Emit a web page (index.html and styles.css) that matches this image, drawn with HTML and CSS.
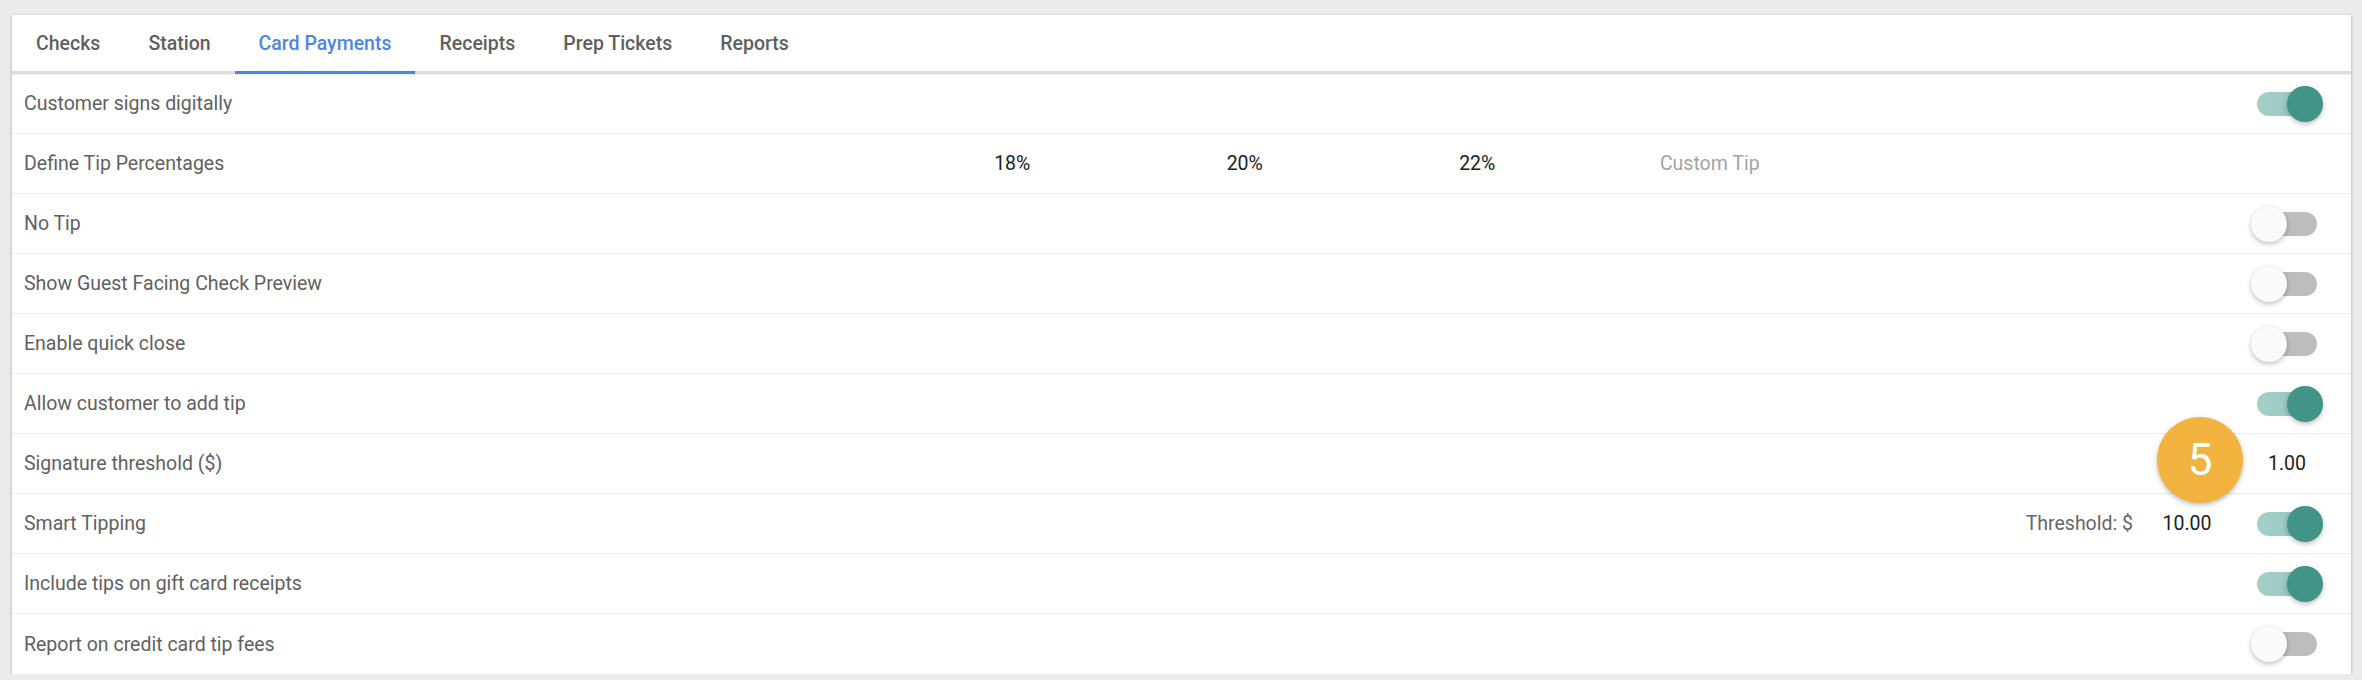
FILE: index.html
```html
<!DOCTYPE html>
<html>
<head>
<meta charset="utf-8">
<link rel="stylesheet" href="styles.css">
</head>
<body>
<div class="card">
  <div class="tabs">
    <div class="tab">Checks</div>
    <div class="tab">Station</div>
    <div class="tab active">Card Payments</div>
    <div class="tab">Receipts</div>
    <div class="tab">Prep Tickets</div>
    <div class="tab">Reports</div>
  </div>
  <div class="rows">
    <div class="row">
      <div class="label">Customer signs digitally</div>
      <div class="toggle on"><span class="track"></span><span class="thumb"></span></div>
    </div>
    <div class="row">
      <div class="label fixed">Define Tip Percentages</div>
      <div class="tip">18%</div>
      <div class="tip">20%</div>
      <div class="tip">22%</div>
      <div class="tip placeholder">Custom Tip</div>
    </div>
    <div class="row">
      <div class="label">No Tip</div>
      <div class="toggle"><span class="track"></span><span class="thumb"></span></div>
    </div>
    <div class="row">
      <div class="label">Show Guest Facing Check Preview</div>
      <div class="toggle"><span class="track"></span><span class="thumb"></span></div>
    </div>
    <div class="row">
      <div class="label">Enable quick close</div>
      <div class="toggle"><span class="track"></span><span class="thumb"></span></div>
    </div>
    <div class="row">
      <div class="label">Allow customer to add tip</div>
      <div class="toggle on"><span class="track"></span><span class="thumb"></span></div>
    </div>
    <div class="row">
      <div class="label">Signature threshold ($)</div>
      <div class="value">1.00<span class="badge">5</span></div>
    </div>
    <div class="row">
      <div class="label">Smart Tipping</div>
      <div class="prefix">Threshold: $</div>
      <div class="value">10.00</div>
      <div class="toggle on"><span class="track"></span><span class="thumb"></span></div>
    </div>
    <div class="row">
      <div class="label">Include tips on gift card receipts</div>
      <div class="toggle on"><span class="track"></span><span class="thumb"></span></div>
    </div>
    <div class="row">
      <div class="label">Report on credit card tip fees</div>
      <div class="toggle"><span class="track"></span><span class="thumb"></span></div>
    </div>
  </div>
</div>
</body>
</html>
```

FILE: styles.css
```css
html, body {
  margin: 0;
  padding: 0;
  background: #ebebeb;
  font-family: Roboto, "Liberation Sans", Arial, sans-serif;
}

.card {
  margin: 15px 11px 0 12px;
  background: #ffffff;
  box-shadow: 0 1px 3px rgba(0, 0, 0, 0.3);
}

.tabs {
  display: flex;
  height: 56px;
  border-bottom: 3px solid #dcdcdc;
  box-shadow: 0 1px 0 #f0f0f0;
}

.tab {
  display: flex;
  align-items: center;
  padding: 0 24px;
  height: 56px;
  margin-bottom: -3px;
  border-bottom: 3px solid transparent;
  font-size: 19.5px;
  font-weight: 500;
  color: #5f5f5f;
  box-sizing: content-box;
}

.tab.active {
  color: #4a86e8;
  border-bottom-color: #4a86e8;
}

.row {
  position: relative;
  display: flex;
  align-items: center;
  height: 59px;
  border-bottom: 1px solid #ececec;
  font-size: 19.5px;
}

.row:last-child {
  border-bottom: none;
  height: 60px;
}

.label {
  flex: 1;
  padding-left: 12px;
  color: #616161;
}

.label.fixed {
  flex: none;
  width: 872px;
}

.tip {
  width: 232.5px;
  text-align: center;
  color: #212121;
}

.tip.placeholder {
  color: #a3a3a3;
}

.prefix {
  color: #666666;
  margin-right: 18px;
}

.value {
  position: relative;
  width: 72px;
  text-align: center;
  color: #212121;
  margin-right: 28px;
}

.badge {
  position: absolute;
  right: 80px;
  top: 50%;
  margin-top: -47px;
  width: 86px;
  height: 86px;
  border-radius: 50%;
  background: #f3b43f;
  color: #ffffff;
  font-size: 44px;
  font-weight: 400;
  display: flex;
  align-items: center;
  justify-content: center;
  box-shadow: 0 2px 5px rgba(0, 0, 0, 0.28);
  z-index: 2;
}

.toggle {
  position: relative;
  width: 72px;
  height: 36px;
  margin-right: 28px;
  flex: none;
}

.track {
  position: absolute;
  left: 6px;
  top: 6px;
  width: 60px;
  height: 24px;
  border-radius: 12px;
  background: #bdbdbd;
}

.thumb {
  position: absolute;
  left: 0;
  top: 0;
  width: 36px;
  height: 36px;
  border-radius: 50%;
  background: #fafafa;
  box-shadow: 0 2px 5px rgba(0, 0, 0, 0.25);
}

.toggle.on .track {
  background: linear-gradient(to right, #a5d0ca, #93c3bb);
}

.toggle.on .thumb {
  left: 36px;
  background: #419486;
}
```
